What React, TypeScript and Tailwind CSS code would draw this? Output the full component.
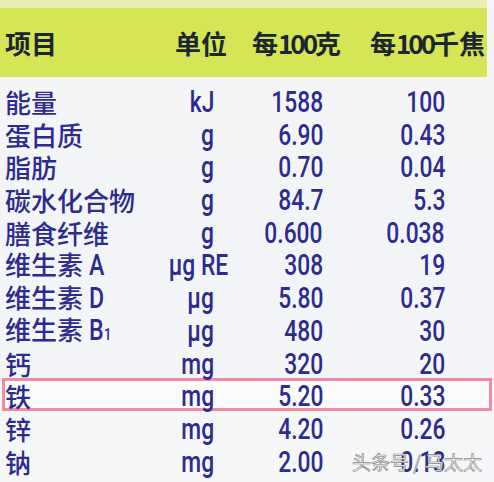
import React from 'react';

type Row = {
  name: React.ReactNode;
  unit: string;
  per100g: string;
  per100kj: string;
  highlight?: boolean;
};

const rows: Row[] = [
  { name: '能量', unit: 'kJ', per100g: '1588', per100kj: '100' },
  { name: '蛋白质', unit: 'g', per100g: '6.90', per100kj: '0.43' },
  { name: '脂肪', unit: 'g', per100g: '0.70', per100kj: '0.04' },
  { name: '碳水化合物', unit: 'g', per100g: '84.7', per100kj: '5.3' },
  { name: '膳食纤维', unit: 'g', per100g: '0.600', per100kj: '0.038' },
  { name: <>维生素 <Latin>A</Latin></>, unit: 'μg RE', per100g: '308', per100kj: '19' },
  { name: <>维生素 <Latin>D</Latin></>, unit: 'μg', per100g: '5.80', per100kj: '0.37' },
  {
    name: (
      <>
        维生素 <Latin>B<span className="text-[17px]">1</span></Latin>
      </>
    ),
    unit: 'μg',
    per100g: '480',
    per100kj: '30',
  },
  { name: '钙', unit: 'mg', per100g: '320', per100kj: '20' },
  { name: '铁', unit: 'mg', per100g: '5.20', per100kj: '0.33', highlight: true },
  { name: '锌', unit: 'mg', per100g: '4.20', per100kj: '0.26' },
  { name: '钠', unit: 'mg', per100g: '2.00', per100kj: '0.13' },
];

function Latin({ children }: { children: React.ReactNode }) {
  return (
    <span className="inline-block origin-left scale-x-[0.8] font-['Roboto'] text-[29px] font-medium leading-none">
      {children}
    </span>
  );
}

// narrow, right-anchored figures like the printed label
function Num({ children }: { children: React.ReactNode }) {
  return (
    <span className="inline-block origin-right scale-x-[0.76] whitespace-nowrap font-['Roboto'] text-[30px] font-medium leading-none">
      {children}
    </span>
  );
}

export default function App() {
  return (
    <div className="relative h-[482px] w-[494px] overflow-hidden bg-gradient-to-b from-[#f6f6f8] via-[#f3f4f7] to-[#f6f7f9] font-['Noto_Sans_CJK_SC',sans-serif]">
      {/* Header band */}
      <div className="w-[487px] bg-[#d5e556]">
        <div className="h-[8px] bg-[#e9efb4]" />
        <div className="grid h-[69px] grid-cols-[170px_77px_118px_1fr] items-center whitespace-nowrap pl-[5px] text-[26px] font-bold leading-none text-[#1c2631]">
          <span>项目</span>
          <span>单位</span>
          <span>
            每<span className="tracking-[-3px]">100</span>克
          </span>
          <span>
            每<span className="tracking-[-3px]">100</span>千焦
          </span>
        </div>
      </div>

      {/* Table body */}
      <div className="mt-[7px] flex flex-col">
        {rows.map((r, i) => (
          <div
            key={i}
            className={
              r.highlight
                ? 'ml-[2px] grid h-[32.7px] w-[490px] grid-cols-[145px_64px_109px_122px] items-center border-[3px] border-[#f18aa3] bg-white/60 text-[#2d2c8e]'
                : 'ml-[2px] grid h-[32.7px] w-[490px] grid-cols-[145px_64px_109px_122px] items-center border-[3px] border-transparent text-[#2d2c8e]'
            }
          >
            <span className="whitespace-nowrap text-[26px] font-medium leading-none">{r.name}</span>
            <span className="text-right leading-none">
              <Num>{r.unit}</Num>
            </span>
            <span className="text-right leading-none">
              <Num>{r.per100g}</Num>
            </span>
            <span className="text-right leading-none">
              <Num>{r.per100kj}</Num>
            </span>
          </div>
        ))}
      </div>

      {/* Watermark */}
      <div className="absolute left-[352px] top-[452px] whitespace-nowrap text-[19px] leading-none text-[#f7f7f7] [-webkit-text-stroke:0.7px_#8a8a8a]">
        头条号 / 马太太
      </div>
    </div>
  );
}
